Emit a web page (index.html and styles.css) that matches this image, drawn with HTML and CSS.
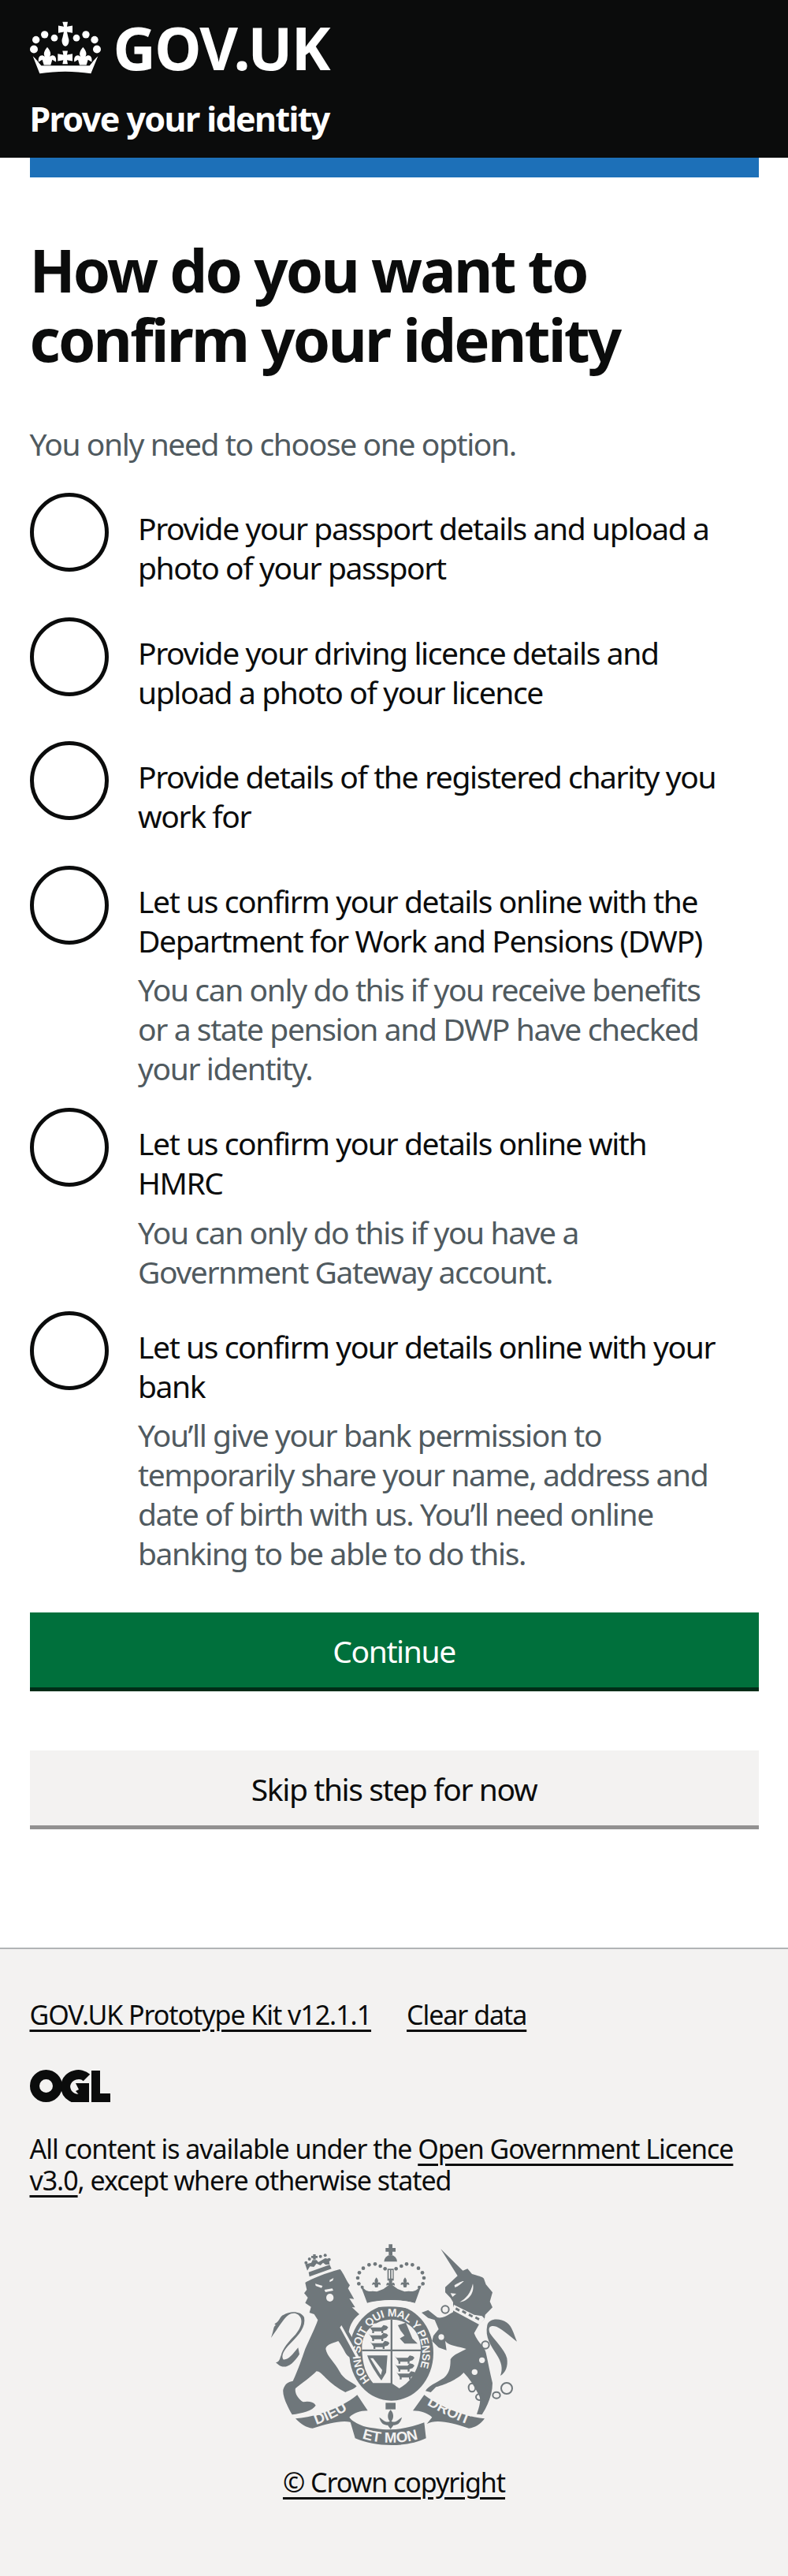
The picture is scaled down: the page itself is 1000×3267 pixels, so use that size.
FILE: index.html
```html
<!DOCTYPE html>
<html lang="en">
<head>
    <meta charset="UTF-8">
    <meta name="viewport" content="width=device-width, initial-scale=1.0">
    <title>How do you want to confirm your identity</title>
    <link rel="stylesheet" href="styles.css">
</head>
<body>
    <header class="site-header">
        <div class="logo-row">
            <svg class="crown" viewBox="114 80 270 200" aria-hidden="true">
                <g fill="#fff">
                    <circle cx="137" cy="150" r="14"/><circle cx="170" cy="130" r="14"/><circle cx="207" cy="143" r="13"/>
                    <circle cx="291" cy="143" r="13"/><circle cx="327" cy="130" r="14"/><circle cx="360" cy="150" r="14"/>
                    <circle cx="129" cy="186" r="15"/><circle cx="369" cy="186" r="15"/>
                    <path d="M238 82h20l-3 18 21-4v28l-21-4 5 22c6 14 0 31-11 33-11-2-17-19-11-33l5-22-21 4V96l21 4z"/>
                    <path d="M238 192h20l-3 15 21-4v28l-21-4 3 15h-20l3-15-21 4v-28l21 4z"/>
                    <path d="M180 178c14 16 15 28 9 36 13-11 28-3 24 20l-14-8-6 20h-26l-6-20-14 8c-4-23 11-31 24-20-6-8-5-20 9-36z"/>
                    <path d="M316 178c14 16 15 28 9 36 13-11 28-3 24 20l-14-8-6 20h-26l-6-20-14 8c-4-23 11-31 24-20-6-8-5-20 9-36z"/>
                    <path d="M125 212c12 10 22 24 32 36h184c10-12 20-26 32-36l-27 66c-65-10-130-10-195 0z"/>
                </g>
            </svg>
            <span class="logo-text">GOV.UK</span>
        </div>
        <a class="service-name" href="#">Prove your identity</a>
    </header>

    <div class="container">
        <div class="phase-bar"></div>
        <main class="main-content">
            <h1>How do you want to confirm your identity</h1>
            <form>
                <p class="hint top-hint">You only need to choose one option.</p>

                <div class="radio-item">
                    <input type="radio" name="option" id="o1">
                    <label for="o1">Provide your passport details and upload a photo of your passport</label>
                </div>
                <div class="radio-item">
                    <input type="radio" name="option" id="o2">
                    <label for="o2">Provide your driving licence details and upload a photo of your licence</label>
                </div>
                <div class="radio-item">
                    <input type="radio" name="option" id="o3">
                    <label for="o3">Provide details of the registered charity you work for</label>
                </div>
                <div class="radio-item">
                    <input type="radio" name="option" id="o4">
                    <label for="o4">Let us confirm your details online with the Department for Work and Pensions (DWP)</label>
                    <p class="hint item-hint">You can only do this if you receive benefits or a state pension and DWP have checked your identity.</p>
                </div>
                <div class="radio-item">
                    <input type="radio" name="option" id="o5">
                    <label for="o5">Let us confirm your details online with HMRC</label>
                    <p class="hint item-hint">You can only do this if you have a Government Gateway account.</p>
                </div>
                <div class="radio-item">
                    <input type="radio" name="option" id="o6">
                    <label for="o6">Let us confirm your details online with your bank</label>
                    <p class="hint item-hint">You’ll give your bank permission to temporarily share your name, address and date of birth with us. You’ll need online banking to be able to do this.</p>
                </div>

                <button class="btn btn-primary" type="submit">Continue</button>
                <button class="btn btn-secondary" type="button">Skip this step for now</button>
            </form>
        </main>
    </div>

    <footer class="site-footer">
        <ul class="footer-links">
            <li><a href="#">GOV.UK Prototype Kit v12.1.1</a></li>
            <li><a href="#">Clear data</a></li>
        </ul>
        <svg class="ogl" viewBox="38 2625 102 41" role="img" aria-label="Open Government Licence logo">
            <g fill="none" stroke="#0b0c0c" stroke-width="12">
                <circle cx="58.500" cy="2645.500" r="14.500"/>
                <path d="M110 2635c-7-7-24-5-27 10 0 14 14 20 23 15"/>
            </g>
            <g fill="#0b0c0c">
                <path d="M96 2642h17v24h-6l-2-4-9-10 4-2z"/>
                <rect x="116" y="2626" width="11" height="40"/>
                <rect x="116" y="2655" width="24" height="11"/>
            </g>
        </svg>
        <p class="licence">All content is available under the <a href="#">Open Government Licence v3.0</a>, except where otherwise stated</p>
        <svg class="arms" viewBox="0 0 1200 960" aria-hidden="true">
            <defs>
                <path id="garterArc" d="M512 632A118 140 0 1 1 668 632"/>
                <path id="dieuArc" d="M300 800C345 785 395 762 440 730"/>
                <path id="monArc" d="M478 850C540 872 640 872 700 850"/>
                <path id="droitArc" d="M725 722C775 750 830 780 895 802"/>
                <path id="passant" d="M0 0h42l8-9 12 3 6 6-7 9-12 4v9h-7v-7H14v7H7v-9L-6-6z"/>
                <path id="crownFleur" d="M0 0c7 8 8 15 5 20 6-4 12-1 11 9l-8-3-3 12H-5l-3-12-8 3c-1-10 5-13 11-9-3-5-2-12 5-20z"/>
            </defs>
            <g fill="#6f777b">
                <!-- lion -->
                <path d="M262 258C290 240 360 215 395 207C410 225 415 245 432 268L425 280L448 320L430 318L452 352L440 352L468 378C445 395 432 420 428 445C445 475 465 510 475 548C460 560 425 545 415 525C405 505 395 490 388 480C360 490 342 495 340 510C345 540 375 560 392 595C410 630 440 635 458 652C445 665 430 668 415 675C385 660 360 640 340 620C325 605 315 595 305 595C285 615 245 645 225 660C220 680 240 705 255 712C275 708 295 712 302 725C290 745 250 755 212 760C195 730 175 690 178 665C185 640 200 635 215 632C235 590 250 545 262 510C280 470 300 430 310 400L296 378L278 372L284 350L262 335L272 315L258 298L268 285Z"/>
                <path d="M240 530C215 570 185 590 160 570L150 562C165 560 165 545 170 535C175 510 200 480 225 455C255 420 255 385 225 375C190 370 175 410 132 468C145 430 140 425 150 420L145 415C165 405 165 385 180 380C205 365 245 365 258 390C265 425 240 455 205 490C180 515 170 535 178 550C195 555 215 530 235 505Z"/>
                <!-- lion crown -->
                <path d="M278 235L362 205L355 190L275 218Z"/>
                <path d="M270 212L262 188L285 182L290 172L305 172L312 180L338 165L352 168L355 188L340 190L330 182L320 192L305 185L295 198L280 196Z"/>
                <path d="M292 150h10v20h-10zM285 156h24v8h-24z"/>
                <circle cx="265" cy="182" r="6"/><circle cx="278" cy="168" r="6"/>
                <circle cx="320" cy="158" r="6"/><circle cx="338" cy="154" r="6"/><circle cx="353" cy="170" r="6"/>
                <!-- main crown -->
                <path d="M580 112h14v14h12v14h-12v14h-14v-14h-12v-14h12z"/>
                <path d="M562 178a25 25 0 0 1 50 0z"/>
                <path d="M575 205h24v45h-24z"/>
                <path d="M472 266C488 285 500 295 518 290L535 292L560 282L587 262L614 282L640 292L657 290C675 295 690 285 705 266L680 335C620 320 555 320 498 335Z"/>
                <use href="#crownFleur" x="533" y="238"/><use href="#crownFleur" x="642" y="238"/>
                <use href="#crownFleur" x="587" y="240"/>
                <circle cx="479" cy="275" r="6"/><circle cx="696" cy="275" r="6"/>
                <circle cx="466" cy="262" r="7"/><circle cx="462" cy="240" r="7"/><circle cx="468" cy="220" r="7"/><circle cx="483" cy="203" r="7"/>
                <circle cx="505" cy="190" r="7"/><circle cx="528" cy="187" r="7"/><circle cx="548" cy="195" r="7"/><circle cx="566" cy="205" r="7"/>
                <circle cx="710" cy="262" r="7"/><circle cx="714" cy="240" r="7"/><circle cx="708" cy="220" r="7"/><circle cx="693" cy="203" r="7"/>
                <circle cx="670" cy="190" r="7"/><circle cx="648" cy="187" r="7"/><circle cx="628" cy="195" r="7"/><circle cx="608" cy="205" r="7"/>
                <!-- garter -->
                <ellipse cx="590" cy="525" rx="160" ry="182"/>
                <!-- unicorn -->
                <path d="M778 130L862 212L880 205L897 225C920 232 935 235 942 242L950 265L975 295L965 330L975 352L947 380L945 395L925 415L905 450C920 490 945 500 950 525C958 560 965 600 975 640C975 680 960 720 935 760L915 758C925 730 935 700 920 680C905 650 885 620 865 600C850 620 800 645 760 655L740 675L720 670C730 650 760 640 790 620C815 600 815 570 815 550C825 530 860 520 875 510C850 500 810 500 795 480L800 515L770 505L745 480L750 460L770 435L755 400L730 392L705 372L730 362L765 390C780 395 800 385 810 378L825 370L825 332L815 316L795 295L795 275L842 232Z"/>
                <path d="M955 420C960 395 1000 390 1030 410C1050 425 1055 450 1068 482C1045 465 1020 440 990 425C970 420 955 425 965 450C985 480 1020 510 1030 545C1035 575 1025 600 1005 612C1015 585 1010 560 990 530C970 500 945 465 955 420Z"/>
                <!-- ribbons -->
                <path d="M225 775C300 770 400 735 460 685L500 745C470 745 445 755 430 770L450 795C420 775 360 790 290 812C265 810 245 795 225 775Z"/>
                <path d="M430 775C470 805 500 810 530 812C600 825 660 810 715 790L722 850C650 885 530 885 452 850Z"/>
                <path d="M945 775C880 770 780 735 715 685L672 745C700 745 730 755 745 770L725 795C760 775 820 790 885 812C910 810 930 795 945 775Z"/>
                <!-- fleur -->
                <path d="M568 715h38v25h-38z"/>
                <path d="M587 742C600 755 600 775 590 785C605 795 620 775 630 770C625 795 610 800 598 800L587 815L576 800C564 800 549 795 544 770C554 775 569 795 584 785C574 775 574 755 587 742Z"/>
            </g>
            <g fill="#f3f2f1">
                <!-- lion face -->
                <ellipse cx="356" cy="315" rx="14" ry="15"/>
                <path d="M300 262l28 8-4 8-22-8zM355 248l15-8-3 10-12 6z"/>
                <path d="M335 285l30-5 4 8-30 6z"/>
                <path d="M400 420l68 122-10 4-64-118z"/>
                <!-- main crown band -->
                <path d="M498 358C490 342 500 332 515 332C560 322 620 322 665 332C682 335 688 345 678 362C620 345 555 345 498 358Z"/>
                <path d="M580 210h5v32h-5zM590 210h5v32h-5z"/>
                <!-- shield -->
                <path d="M478 505C478 440 530 398 590 398C650 398 700 440 702 505C700 590 660 640 620 660L590 640L520 640C495 610 478 570 478 505Z"/>
                <!-- unicorn details -->
                <path d="M830 268C845 258 862 250 866 252C855 262 845 272 832 276z"/>
                <path d="M815 298l22 2-14 12z"/>
                <path d="M900 262C908 295 885 328 850 332C875 318 892 298 900 262z"/>
                <path d="M828 342L822 362L925 418L945 395L935 385L905 380Z"/>
                <circle cx="935" cy="553" r="11"/><circle cx="907" cy="598" r="11"/>
                <circle cx="795" cy="360" r="11"/><circle cx="780" cy="465" r="11"/><circle cx="948" cy="495" r="11"/>
            </g>
            <g fill="none" stroke="#6f777b" stroke-width="6">
                <circle cx="795" cy="360" r="14"/><circle cx="780" cy="465" r="15"/><circle cx="948" cy="495" r="14"/>
                <ellipse cx="897" cy="657" rx="13" ry="16"/><ellipse cx="928" cy="693" rx="16" ry="12"/>
                <ellipse cx="990" cy="686" rx="14" ry="12"/><circle cx="1029" cy="660" r="21"/>
            </g>
            <g fill="#6f777b">
                <path d="M837 352l14 8-4 8-14-8zM862 362l14 8-4 8-14-8zM887 375l14 8-4 8-14-8zM912 386l14 8-4 8-14-8z"/>
                <path d="M587 398h7v250h-7z"/>
                <path d="M478 512h224v7h-224z"/>
                <!-- three lions, top left and bottom right -->
                <use href="#passant" x="510" y="428"/><use href="#passant" x="510" y="458"/><use href="#passant" x="515" y="488"/>
                <use href="#passant" x="610" y="544"/><use href="#passant" x="610" y="574"/><use href="#passant" x="615" y="604"/>
                <!-- lion rampant top right -->
                <path d="M615 420L645 410L670 470L690 490L640 490L622 470L640 460L625 440Z"/>
                <!-- harp -->
                <path d="M498 535L575 535L570 600L552 630C530 600 510 570 498 535ZM510 545L550 610L555 590L520 545Z"/>
            </g>
            <g class="arms-text" fill="#f3f2f1">
                <text class="garter-text"><textPath href="#garterArc" startOffset="4">HONI SOIT QUI MAL Y PENSE</textPath></text>
                <text class="ribbon-text"><textPath href="#dieuArc" startOffset="4">DIEU</textPath></text>
                <text class="ribbon-text"><textPath href="#monArc">ET MON</textPath></text>
                <text class="ribbon-text"><textPath href="#droitArc">DROIT</textPath></text>
            </g>
        </svg>
        <a class="copyright" href="#">© Crown copyright</a>
    </footer>
</body>
</html>
```

FILE: styles.css
```css
* {
    box-sizing: border-box;
}
body {
    margin: 0;
    font-family: "Noto Sans", Arial, sans-serif;
    font-size: 39px;
    line-height: 50px;
    letter-spacing: -1.4px;
    color: #0b0c0c;
    background: #fff;
}
a {
    color: #0b0c0c;
    text-decoration-thickness: 3px;
    text-underline-offset: 6px;
}
.site-header {
    height: 200px;
    padding: 27px 37.5px 0;
    background: #0b0c0c;
    color: #fff;
}
.logo-row {
    display: flex;
    align-items: center;
    gap: 16px;
    height: 67px;
}
.crown {
    width: 90px;
    height: 67px;
    flex: none;
}
.logo-text {
    font-size: 75px;
    line-height: 67px;
    font-weight: 700;
    letter-spacing: -1.6px;
}
.service-name {
    display: block;
    margin-top: 32px;
    font-size: 43px;
    line-height: 50px;
    font-weight: 700;
    color: #fff;
    text-decoration: none;
    letter-spacing: -1.6px;
}
.container {
    padding: 0 37.5px;
}
.phase-bar {
    height: 25px;
    background: #1d70b8;
}
.main-content {
    padding-top: 73px;
}
h1 {
    margin: 0 0 64.5px;
    font-size: 76px;
    line-height: 87.5px;
    font-weight: 700;
    letter-spacing: -2.8px;
}
.hint {
    margin: 0;
    color: #505a5f;
}
.top-hint {
    margin-bottom: 37.5px;
}
.radio-item {
    position: relative;
    min-height: 100px;
    margin-bottom: 25px;
    padding-left: 100px;
}
.radio-item:last-of-type {
    margin-bottom: 0;
}
.radio-item input {
    position: absolute;
    top: 0;
    left: 0;
    width: 100px;
    height: 100px;
    margin: 0;
    appearance: none;
    border: 5px solid #0b0c0c;
    border-radius: 50%;
    background: #fff;
}
.radio-item label {
    display: block;
    padding: 20px 37.5px 12.5px;
}
.item-hint {
    padding: 0 37.5px;
}
.btn {
    display: block;
    width: 100%;
    height: 100px;
    padding: 0 0 4px;
    border: 0;
    font-family: inherit;
    font-size: 39px;
    letter-spacing: -1.4px;
    text-align: center;
}
.btn-primary {
    margin-top: 50px;
    margin-bottom: 75px;
    background: #00703c;
    color: #fff;
    box-shadow: inset 0 -5px 0 #002d18;
}
.btn-secondary {
    background: #f3f2f1;
    color: #0b0c0c;
    box-shadow: inset 0 -5px 0 #929191;
}
.site-footer {
    margin-top: 150px;
    height: 797px;
    padding: 62.5px 37.5px 0;
    border-top: 2.5px solid #b1b4b6;
    background: #f3f2f1;
    font-size: 34px;
    line-height: 40px;
    letter-spacing: -1.05px;
}
.footer-links {
    display: flex;
    gap: 45px;
    margin: 0 0 50px;
    padding: 0;
    list-style: none;
}
.ogl {
    display: block;
    width: 102px;
    height: 41px;
    margin-bottom: 39px;
}
.licence {
    margin: 0;
}
.arms {
    display: block;
    width: 400px;
    height: 320px;
    margin: 24px auto -1px;
}
.arms-text {
    font-family: "Liberation Sans", Arial, sans-serif;
    font-weight: 700;
}
.garter-text {
    font-size: 42px;
    letter-spacing: -1px;
}
.ribbon-text {
    font-size: 56px;
    letter-spacing: 0;
}
.copyright {
    display: block;
    width: max-content;
    margin: 0 auto;
}
```
